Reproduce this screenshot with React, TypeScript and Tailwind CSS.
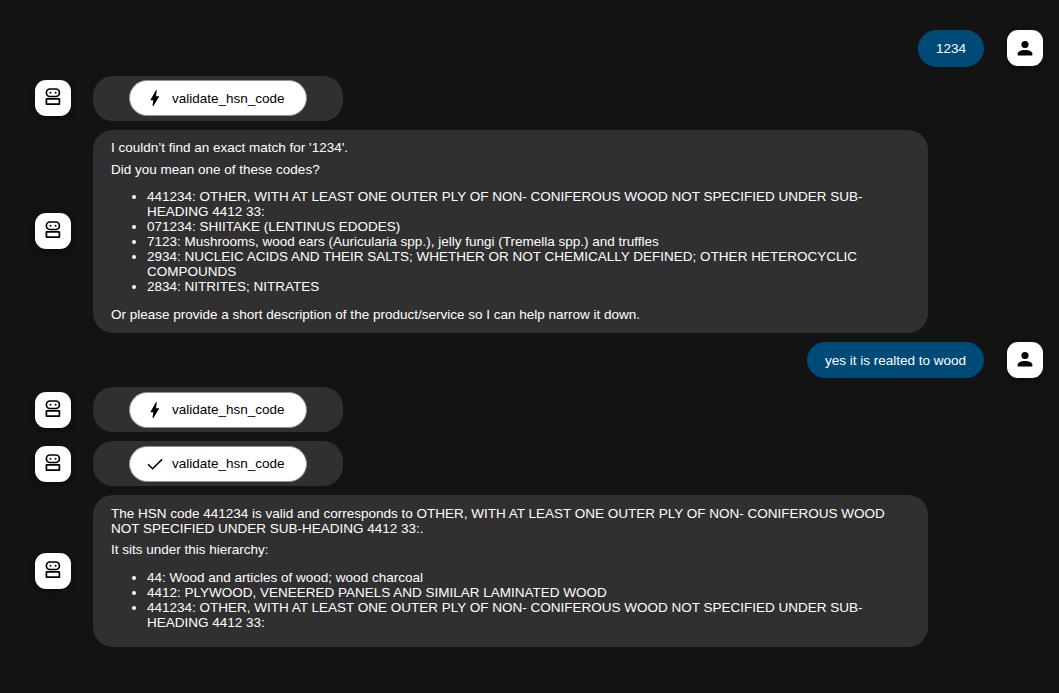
import type { ReactNode } from "react";

const font = "font-['Liberation_Sans',Arial,sans-serif]";

function PersonIcon({ raised }: { raised?: boolean }) {
  return (
    <svg viewBox="0 0 24 24" className={`size-[22px] ${raised ? "mb-0.5" : ""}`} fill="#000">
      <circle cx="12" cy="8.2" r="3.9" />
      <path d="M4 20.2v-2.1c0-2.3 4-3.9 8-3.9s8 1.6 8 3.9v2.1z" />
    </svg>
  );
}

function RobotIcon() {
  return (
    <svg viewBox="0 0 18 18" className="mb-0.5 size-[18px]" fill="none" stroke="#000" strokeWidth="1.7">
      <rect x="2.4" y="1" width="13" height="7.5" rx="3.5" />
      <rect x="2.4" y="10.9" width="13" height="5.3" rx="0.3" />
      <circle cx="6.4" cy="4.8" r="0.95" fill="#000" stroke="none" />
      <circle cx="11.6" cy="4.8" r="0.95" fill="#000" stroke="none" />
    </svg>
  );
}

function BoltIcon() {
  return (
    <svg viewBox="0 0 18 18" className="size-[18px]" fill="#000">
      <path d="M6.5 17l.8-5.8H4.3L9.9 1.2h.9L10 7.2h3.4L7.4 17z" />
    </svg>
  );
}

function CheckIcon() {
  return (
    <svg viewBox="0 0 18 18" className="size-[18px]" fill="none" stroke="#000" strokeWidth="1.5">
      <path d="M2.1 9.3l4.5 4.5L16 4.4" />
    </svg>
  );
}

function Avatar({ children }: { children: ReactNode }) {
  return (
    <div className="flex size-9 shrink-0 items-center justify-center rounded-[11px] bg-white shadow-[0_3px_5px_-1px_rgba(0,0,0,0.2),0_2px_6px_rgba(0,0,0,0.3)]">
      {children}
    </div>
  );
}

function UserRow({ text, tall }: { text: string; tall?: boolean }) {
  return (
    <div className="flex items-start justify-end pr-4">
      <div className={`mr-[23px] flex items-center rounded-[20px] bg-[#004a77] px-[18px] ${tall ? "h-[37px]" : "h-9"}`}>
        {text}
      </div>
      <Avatar>
        <PersonIcon raised={!tall} />
      </Avatar>
    </div>
  );
}

function BotRow({ raised, children }: { raised?: boolean; children: ReactNode }) {
  return (
    <div className="flex items-center pl-[35px]">
      <div className={raised ? "pb-[2px]" : ""}>
        <Avatar>
          <RobotIcon />
        </Avatar>
      </div>
      <div className="ml-[22px]">{children}</div>
    </div>
  );
}

function ToolCall({ done, raised }: { done?: boolean; raised?: boolean }) {
  return (
    <BotRow raised={raised}>
      <div className={`flex h-[45px] w-[250px] items-start rounded-[20px] bg-[#303030] pl-9 ${raised ? "pt-1" : "pt-[5px]"}`}>
        <button className={`flex h-9 w-[178px] items-center gap-2 rounded-full border border-[#8e918f] bg-white pl-4 text-black ${raised ? "" : "pb-px"}`}>
          <span className={raised ? "" : "pt-px"}>{done ? <CheckIcon /> : <BoltIcon />}</span>
          <span className={raised ? "" : "-mt-px"}>validate_hsn_code</span>
        </button>
      </div>
    </BotRow>
  );
}

export default function App() {
  return (
    <main className={`flex h-[693px] w-[1059px] flex-col gap-[9px] overflow-hidden bg-[#131313] pt-[30px] text-[13.5px] leading-[15px] text-white ${font}`}>
      <UserRow text="1234" tall />
      <ToolCall raised />
      <BotRow raised>
        <div className="h-[203px] w-[835px] rounded-[20px] bg-[#303030] px-[18px] pt-[10px]">
          <p>I couldn’t find an exact match for '1234'.</p>
          <p className="mt-[7px]">Did you mean one of these codes?</p>
          <ul className="mt-3 mr-7 list-disc pl-9">
            <li>441234: OTHER, WITH AT LEAST ONE OUTER PLY OF NON- CONIFEROUS WOOD NOT SPECIFIED UNDER SUB-HEADING 4412 33:</li>
            <li>071234: SHIITAKE (LENTINUS EDODES)</li>
            <li>7123: Mushrooms, wood ears (Auricularia spp.), jelly fungi (Tremella spp.) and truffles</li>
            <li>2934: NUCLEIC ACIDS AND THEIR SALTS; WHETHER OR NOT CHEMICALLY DEFINED; OTHER HETEROCYCLIC COMPOUNDS</li>
            <li>2834: NITRITES; NITRATES</li>
          </ul>
          <p className="mt-[13px]">Or please provide a short description of the product/service so I can help narrow it down.</p>
        </div>
      </BotRow>
      <UserRow text="yes it is realted to wood" />
      <ToolCall />
      <ToolCall done />
      <BotRow>
        <div className="h-[152px] w-[835px] rounded-[20px] bg-[#303030] px-[18px] pt-[11px]">
          <p>The HSN code 441234 is valid and corresponds to OTHER, WITH AT LEAST ONE OUTER PLY OF NON- CONIFEROUS WOOD NOT SPECIFIED UNDER SUB-HEADING 4412 33:.</p>
          <p className="mt-[6px]">It sits under this hierarchy:</p>
          <ul className="mt-[13px] mr-7 list-disc pl-9">
            <li>44: Wood and articles of wood; wood charcoal</li>
            <li>4412: PLYWOOD, VENEERED PANELS AND SIMILAR LAMINATED WOOD</li>
            <li>441234: OTHER, WITH AT LEAST ONE OUTER PLY OF NON- CONIFEROUS WOOD NOT SPECIFIED UNDER SUB-HEADING 4412 33:</li>
          </ul>
        </div>
      </BotRow>
    </main>
  );
}
